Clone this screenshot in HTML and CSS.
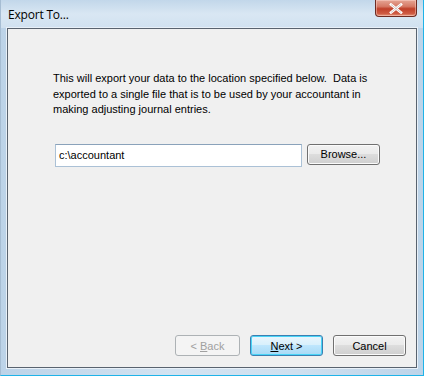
FILE: index.html
```html
<!DOCTYPE html>
<html>
<head>
<meta charset="utf-8">
<link rel="stylesheet" href="styles.css">
</head>
<body>
<div class="window">
  <div class="titlebar">
    <span class="title">Export To...</span>
    <div class="close">
      <svg width="14" height="11" viewBox="0 0 14 11"><path d="M2 1.5 L12 9.5 M12 1.5 L2 9.5" stroke="#fff" stroke-width="2.6" stroke-linecap="square"/><path d="M2 1.5 L12 9.5 M12 1.5 L2 9.5" stroke="#6b4a45" stroke-width="0.6" fill="none" opacity="0.5"/></svg>
    </div>
  </div>
  <div class="client">
    <p class="intro">This will export your data to the location specified below.&nbsp; Data is exported to a single file that is to be used by your accountant in making adjusting journal entries.</p>
    <div class="pathrow">
      <div class="field">c:\accountant</div>
      <button class="btn browse">Browse...</button>
    </div>
    <div class="spacer"></div>
    <div class="footer">
      <button class="btn back" disabled>&lt; <u>B</u>ack</button>
      <button class="btn next"><u>N</u>ext &gt;</button>
      <button class="btn cancel">Cancel</button>
    </div>
  </div>
</div>
</body>
</html>
```
FILE: styles.css
```css
html, body {
  margin: 0;
  padding: 0;
  background: #fff;
}
.window {
  width: 424px;
  height: 376px;
  box-sizing: border-box;
  display: flex;
  flex-direction: column;
  background: linear-gradient(90deg, #bcd3e8 0%, #d3e3f1 40%, #cfe0ef 70%, #bdd4e9 100%);
  border-right: 1px solid #1fb3e8;
  border-bottom: 1px solid #1fb3e8;
  border-left: 1px solid #a6bdd3;
  position: relative;
  font-family: "Liberation Sans", Arial, sans-serif;
}
.titlebar {
  height: 28px;
  display: flex;
  align-items: flex-start;
  padding-left: 7px;
  background: linear-gradient(180deg, #c2d7ea 0%, #d9e7f3 50%, #d0e1f0 100%);
}
.title {
  font-family: "Open Sans", "Noto Sans", sans-serif;
  font-size: 12px;
  color: #000;
  margin-top: 6px;
  letter-spacing: -0.2px;
}
.close {
  margin-left: auto;
  margin-right: 6px;
  width: 42px;
  height: 17px;
  box-sizing: border-box;
  border: 1px solid #6d2b22;
  border-top: none;
  border-radius: 0 0 4px 4px;
  background: linear-gradient(180deg, #e6a595 0%, #d67a66 40%, #c0402a 55%, #cf5c43 85%, #e79a80 100%);
  display: flex;
  align-items: center;
  justify-content: center;
  box-shadow: inset 0 0 0 1px rgba(255,220,210,0.45);
}
.client {
  flex: 1;
  margin: 0 6px 7px 6px;
  background: #f0f0f0;
  border: 1px solid #59636f;
  display: flex;
  flex-direction: column;
  padding: 42px 0 11px 45px;
  box-shadow: 0 0 0 1px #e8f0f8;
}
.intro {
  margin: 0;
  font-size: 11px;
  line-height: 15.5px;
  width: 320px;
  color: #000;
}
.pathrow {
  display: flex;
  align-items: flex-start;
  margin-top: 26px;
  padding-left: 2px;
}
.field {
  width: 247px;
  height: 23px;
  box-sizing: border-box;
  border: 1px solid #abc1d6;
  border-top-color: #8aa2ba;
  background: #fff;
  font-size: 11px;
  line-height: 21px;
  padding-left: 3px;
}
.btn {
  font-family: "Liberation Sans", Arial, sans-serif;
  font-size: 11px;
  color: #000;
  height: 21px;
  box-sizing: border-box;
  border: 1px solid #707070;
  border-radius: 3px;
  background: linear-gradient(180deg, #f2f2f2 0%, #ebebeb 45%, #dddddd 50%, #cfcfcf 100%);
  box-shadow: inset 0 0 0 1px #fbfbfb;
  padding: 0;
}
.browse {
  width: 73px;
  margin-left: 5px;
}
.spacer {
  flex: 1;
}
.footer {
  display: flex;
  justify-content: flex-end;
  gap: 10px;
  padding-right: 10px;
}
.next, .cancel {
  width: 73px;
}
.back {
  color: #a0a0a0;
  border-color: #adb2b5;
  background: #f4f4f4;
  box-shadow: none;
  width: 65px;
}
.next {
  border-color: #3c7fb1;
  background: linear-gradient(180deg, #eaf6fd 0%, #d9f0fc 45%, #bee6fd 50%, #a7d9f5 100%);
  box-shadow: inset 0 0 0 1px #48d4f7;
}
```
